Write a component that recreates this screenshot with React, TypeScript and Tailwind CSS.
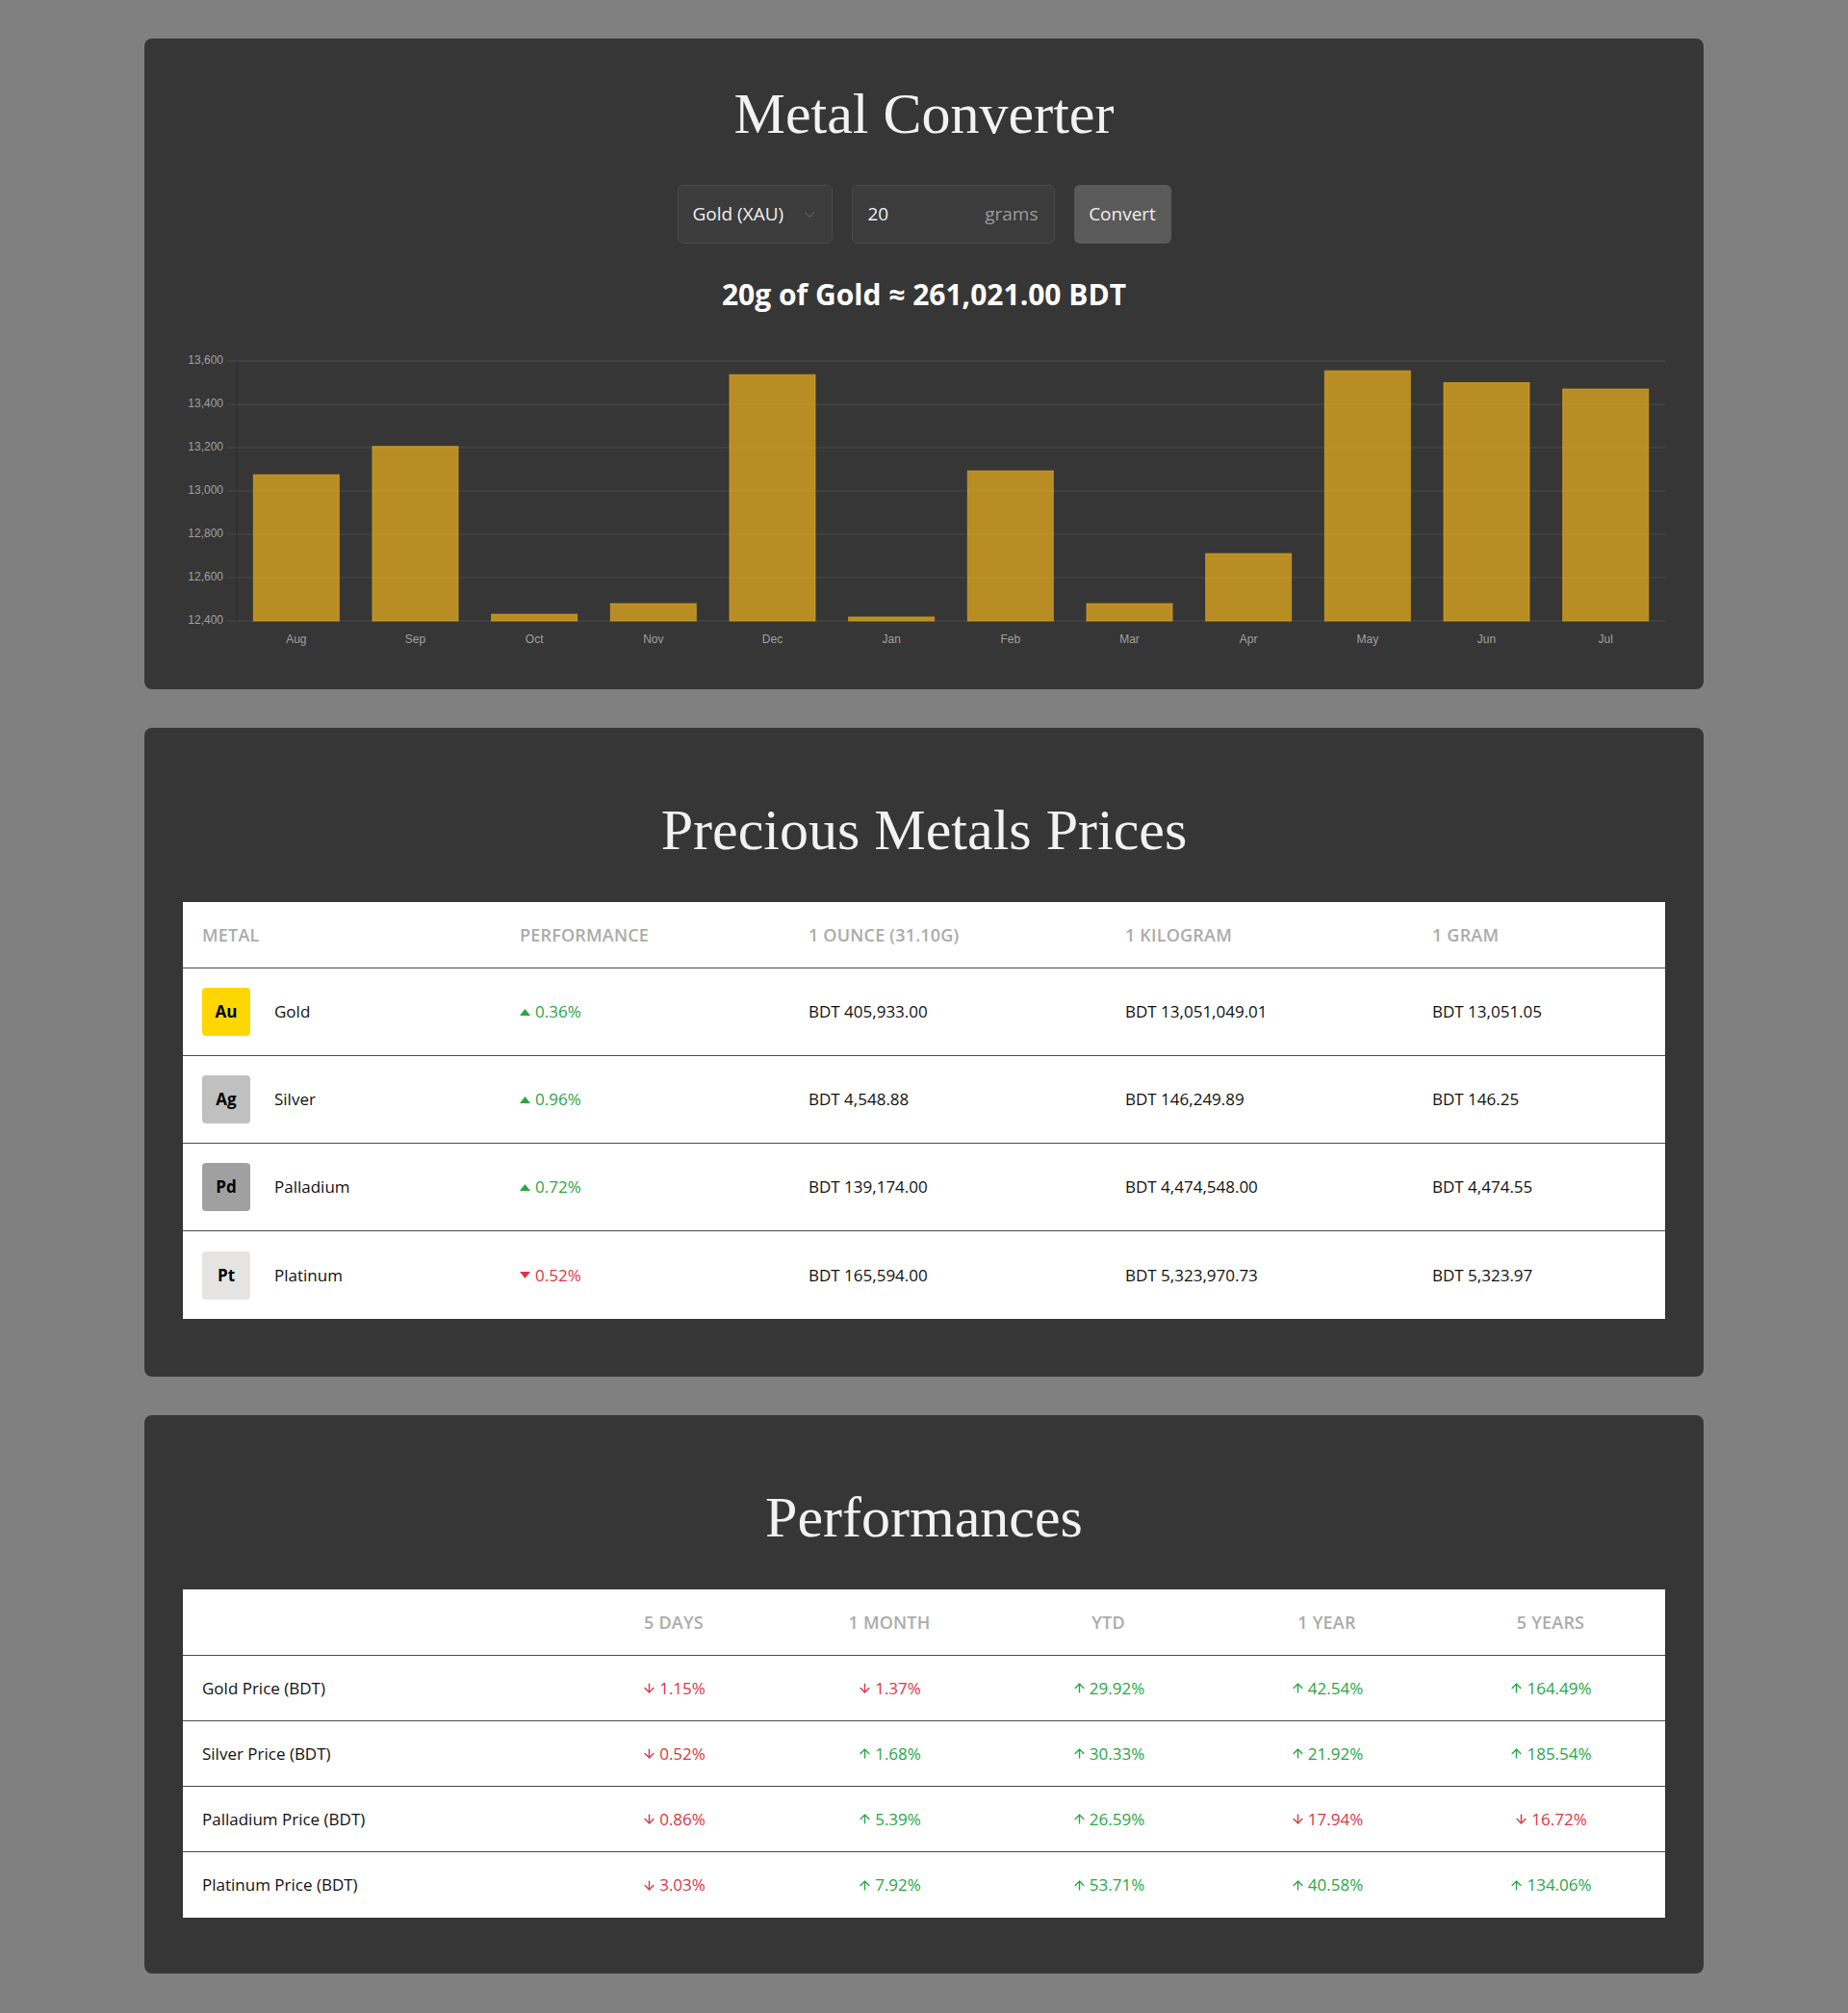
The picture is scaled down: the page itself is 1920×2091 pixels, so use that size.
import React from 'react';
import { ArrowDown, ArrowUp, ChevronDown } from 'lucide-react';

const monthly = [
  { m: 'Aug', v: 13075 },
  { m: 'Sep', v: 13206 },
  { m: 'Oct', v: 12431 },
  { m: 'Nov', v: 12480 },
  { m: 'Dec', v: 13537 },
  { m: 'Jan', v: 12418 },
  { m: 'Feb', v: 13093 },
  { m: 'Mar', v: 12480 },
  { m: 'Apr', v: 12711 },
  { m: 'May', v: 13555 },
  { m: 'Jun', v: 13500 },
  { m: 'Jul', v: 13471 },
];

const metals = [
  { sym: 'Au', name: 'Gold', badge: 'bg-[#ffd700]', perf: '0.36%', up: true, oz: 'BDT 405,933.00', kg: 'BDT 13,051,049.01', g: 'BDT 13,051.05' },
  { sym: 'Ag', name: 'Silver', badge: 'bg-[#c0c0c0]', perf: '0.96%', up: true, oz: 'BDT 4,548.88', kg: 'BDT 146,249.89', g: 'BDT 146.25' },
  { sym: 'Pd', name: 'Palladium', badge: 'bg-[#a0a0a0]', perf: '0.72%', up: true, oz: 'BDT 139,174.00', kg: 'BDT 4,474,548.00', g: 'BDT 4,474.55' },
  { sym: 'Pt', name: 'Platinum', badge: 'bg-[#e5e4e2]', perf: '0.52%', up: false, oz: 'BDT 165,594.00', kg: 'BDT 5,323,970.73', g: 'BDT 5,323.97' },
];

const perfRows: { label: string; vals: [string, boolean][] }[] = [
  { label: 'Gold Price (BDT)', vals: [['1.15%', false], ['1.37%', false], ['29.92%', true], ['42.54%', true], ['164.49%', true]] },
  { label: 'Silver Price (BDT)', vals: [['0.52%', false], ['1.68%', true], ['30.33%', true], ['21.92%', true], ['185.54%', true]] },
  { label: 'Palladium Price (BDT)', vals: [['0.86%', false], ['5.39%', true], ['26.59%', true], ['17.94%', false], ['16.72%', false]] },
  { label: 'Platinum Price (BDT)', vals: [['3.03%', false], ['7.92%', true], ['53.71%', true], ['40.58%', true], ['134.06%', true]] },
];

const font = { fontFamily: '"Open Sans", "Noto Sans", sans-serif' };
const serif = { fontFamily: '"Liberation Serif", "Times New Roman", serif' };

function PriceChart() {
  const left = 56;
  const right = 1540;
  const top = 15;
  const bottom = 285;
  const cat = (right - left) / monthly.length;
  const barW = cat * 0.72;
  const y = (v: number) => top + (13600 - v) * ((bottom - top) / 1200);
  const ticks = [13600, 13400, 13200, 13000, 12800, 12600, 12400];

  return (
    <svg width={1540} height={320} viewBox="0 0 1540 320" className="block" style={{ fontFamily: '"Liberation Sans", Arial, sans-serif' }}>
      {ticks.map((t) => (
        <g key={t}>
          <line x1={46} x2={right} y1={y(t)} y2={y(t)} stroke="#4a4a4a" strokeWidth={1} />
          <text x={42} y={y(t)} textAnchor="end" dominantBaseline="middle" fontSize={12} fill="#a0a0a0">
            {t.toLocaleString('en-US')}
          </text>
        </g>
      ))}
      <line x1={left} x2={left} y1={top} y2={bottom} stroke="#2c2c2c" strokeWidth={1} />
      {monthly.map((d, i) => {
        const x = left + i * cat + (cat - barW) / 2;
        return (
          <g key={d.m}>
            <rect x={x} y={y(d.v)} width={barW} height={bottom - y(d.v)} fill="#daa520" fillOpacity={0.8} stroke="#daa520" strokeOpacity={0.7} strokeWidth={1} />
            <text x={left + i * cat + cat / 2} y={305} textAnchor="middle" dominantBaseline="middle" fontSize={12} fill="#a0a0a0">
              {d.m}
            </text>
          </g>
        );
      })}
    </svg>
  );
}

function Caret({ up }: { up: boolean }) {
  return (
    <svg width={11} height={7} viewBox="0 0 11 7" className="shrink-0">
      {up ? <path d="M5.5 0 L11 7 L0 7 Z" fill="#28a745" /> : <path d="M0 0 L11 0 L5.5 7 Z" fill="#dc3545" />}
    </svg>
  );
}

export default function App() {
  return (
    <div className="min-h-[2091px] bg-[#808080] py-10" style={font}>
      <div className="mx-auto flex w-[1620px] flex-col gap-10">
        {/* Converter */}
        <section className="rounded-lg bg-[#363636] px-10 pt-[44px] pb-[36px]">
          <h1 className="text-center text-[60px] leading-[69px] text-[#f2f2f2]" style={serif}>
            Metal Converter
          </h1>
          <div className="mt-[39px] flex justify-center gap-5">
            <div className="flex h-[61px] w-[161px] items-center justify-between rounded-md border border-[#4a4a4a] bg-[#3c3c3c] pl-[15px] pr-[14px] text-[19px] text-[#f0f0f0]">
              <span>Gold (XAU)</span>
              <ChevronDown size={18} strokeWidth={1.5} className="text-[#5c5c5c]" />
            </div>
            <div className="flex h-[61px] w-[211px] items-center justify-between rounded-md border border-[#4a4a4a] bg-[#3c3c3c] px-4 text-[19px]">
              <span className="text-[#f0f0f0]">20</span>
              <span className="text-[#9a9a9a]">grams</span>
            </div>
            <button type="button" className="h-[61px] w-[101px] rounded-md bg-[#5a5a5a] text-[19px] text-[#f0f0f0]">
              Convert
            </button>
          </div>
          <p className="mt-[33px] text-center text-[30px] leading-[40px] font-bold text-white">
            20g of Gold ≈ 261,021.00 BDT
          </p>
          <div className="mt-[34px]">
            <PriceChart />
          </div>
        </section>

        {/* Precious metals prices */}
        <section className="rounded-lg bg-[#363636] px-10 pt-[72px] pb-[60px]">
          <h2 className="text-center text-[60px] leading-[69px] text-[#f2f2f2]" style={serif}>
            Precious Metals Prices
          </h2>
          <div className="mt-10 bg-white">
            <div className="grid h-[69px] grid-cols-[330px_300px_329px_319px_1fr] items-center border-b border-[#4a4a4a] text-[18px] font-semibold tracking-[0.2px] text-[#ababab] uppercase">
              <div className="pl-5">Metal</div>
              <div className="pl-5">Performance</div>
              <div className="pl-5">1 Ounce (31.10g)</div>
              <div className="pl-5">1 Kilogram</div>
              <div className="pl-5">1 Gram</div>
            </div>
            {metals.map((m, i) => (
              <div
                key={m.sym}
                className={`grid h-[91px] grid-cols-[330px_300px_329px_319px_1fr] items-center text-[17px] text-[#111] ${i < metals.length - 1 ? 'border-b border-[#4a4a4a]' : ''}`}
              >
                <div className="flex items-center gap-[25px] pl-5">
                  <div className={`flex h-[50px] w-[50px] items-center justify-center rounded ${m.badge} text-[17px] font-bold text-black`}>
                    {m.sym}
                  </div>
                  <span>{m.name}</span>
                </div>
                <div className={`flex items-center gap-[5px] pl-5 ${m.up ? 'text-[#28a745]' : 'text-[#dc3545]'}`}>
                  <Caret up={m.up} />
                  <span>{m.perf}</span>
                </div>
                <div className="pl-5">{m.oz}</div>
                <div className="pl-5">{m.kg}</div>
                <div className="pl-5">{m.g}</div>
              </div>
            ))}
          </div>
        </section>

        {/* Performances */}
        <section className="rounded-lg bg-[#363636] px-10 pt-[72px] pb-[58px]">
          <h2 className="text-center text-[60px] leading-[69px] text-[#f2f2f2]" style={serif}>
            Performances
          </h2>
          <div className="mt-10 bg-white">
            <div className="grid h-[69px] grid-cols-[400px_220px_228px_227px_227px_1fr] items-center border-b border-[#4a4a4a] text-[18px] font-semibold tracking-[0.2px] text-[#ababab] uppercase">
              <div />
              <div className="text-center">5 Days</div>
              <div className="text-center">1 Month</div>
              <div className="text-center">YTD</div>
              <div className="text-center">1 Year</div>
              <div className="text-center">5 Years</div>
            </div>
            {perfRows.map((r, i) => (
              <div
                key={r.label}
                className={`grid h-[68px] grid-cols-[400px_220px_228px_227px_227px_1fr] items-center text-[17px] ${i < perfRows.length - 1 ? 'border-b border-[#4a4a4a]' : ''}`}
              >
                <div className="pl-5 text-[#111]">{r.label}</div>
                {r.vals.map(([v, up], j) => (
                  <div key={j} className={`flex items-center justify-center gap-[3px] ${up ? 'text-[#28a745]' : 'text-[#dc3545]'}`}>
                    {up ? <ArrowUp size={15} strokeWidth={2.25} /> : <ArrowDown size={15} strokeWidth={2.25} />}
                    <span>{v}</span>
                  </div>
                ))}
              </div>
            ))}
          </div>
        </section>
      </div>
    </div>
  );
}
